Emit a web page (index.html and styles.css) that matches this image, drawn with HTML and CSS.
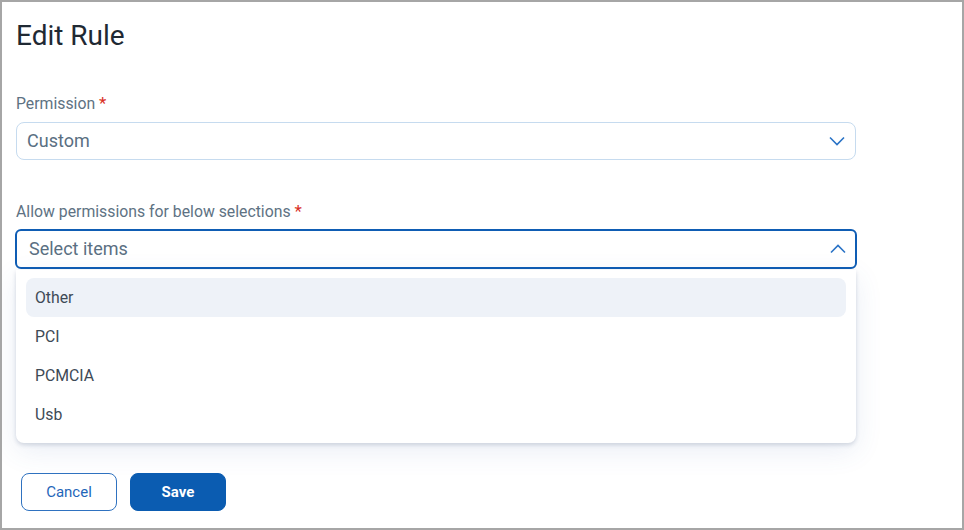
FILE: index.html
```
<!DOCTYPE html>
<html>
<head>
<meta charset="utf-8">
<link rel="stylesheet" href="styles.css">
</head>
<body>
<div class="frame">
  <h1 class="title">Edit Rule</h1>
  <div class="field field-first">
    <label class="label">Permission <span class="req">*</span></label>
    <div class="select">
      <span class="select-value">Custom</span>
      <svg class="chev" width="16" height="10" viewBox="0 0 16 10"><path d="M1 1.5 L8 8.5 L15 1.5" fill="none" stroke="#2a73c6" stroke-width="1.6"/></svg>
    </div>
  </div>
  <div class="field field-second">
    <label class="label">Allow permissions for below selections <span class="req">*</span></label>
    <div class="select select-open">
      <span class="select-value placeholder">Select items</span>
      <svg class="chev" width="16" height="10" viewBox="0 0 16 10"><path d="M1 8.5 L8 1.5 L15 8.5" fill="none" stroke="#2a73c6" stroke-width="1.6"/></svg>
    </div>
    <ul class="menu">
      <li class="item item-active">Other</li>
      <li class="item">PCI</li>
      <li class="item">PCMCIA</li>
      <li class="item">Usb</li>
    </ul>
  </div>
  <div class="actions">
    <button class="btn btn-outline">Cancel</button>
    <button class="btn btn-primary">Save</button>
  </div>
</div>
</body>
</html>
```
FILE: styles.css
```
html, body {
  margin: 0;
  padding: 0;
  background: #ffffff;
}
.frame {
  width: 964px;
  height: 530px;
  box-sizing: border-box;
  border: 2px solid #a6a6a6;
  padding: 16px 0 0 14px;
  font-family: Roboto, "Liberation Sans", sans-serif;
  overflow: hidden;
}
.title {
  margin: 0;
  font-size: 28px;
  line-height: 36px;
  font-weight: 400;
  color: #1f2933;
}
.field {
  width: 840px;
}
.field-first {
  margin-top: 39px;
}
.field-second {
  margin-top: 41px;
}
.label {
  display: block;
  height: 20px;
  font-size: 15.8px;
  line-height: 20px;
  color: #5e7283;
}
.req {
  color: #d93025;
  font-size: 17px;
  line-height: 20px;
}
.select {
  margin-top: 9px;
  height: 38px;
  box-sizing: border-box;
  border: 1px solid #c6dbef;
  border-radius: 8px;
  display: flex;
  align-items: center;
  justify-content: space-between;
  padding: 0 10px 0 10px;
}
.select-open {
  margin-top: 8px;
  margin-left: -1px;
  width: 842px;
  height: 40px;
  border: 2px solid #0f5db4;
  border-radius: 6px;
  padding: 0 9px 0 12px;
}
.select-value {
  font-size: 18px;
  color: #5a6f82;
  position: relative;
  top: -1px;
}
.placeholder {
  color: #5a6f82;
}
.chev {
  display: block;
}
.menu {
  list-style: none;
  margin: 1px 0 0 0;
  padding: 8px 10px 9px 10px;
  background: #ffffff;
  border-radius: 0 0 8px 8px;
  box-shadow: 0 2px 4px rgba(40, 60, 100, 0.18), 0 8px 28px rgba(60, 100, 170, 0.11);
}
.item {
  height: 39px;
  display: flex;
  align-items: center;
  padding-left: 9px;
  font-size: 15.8px;
  color: #3e4a56;
  border-radius: 8px;
}
.item-active {
  background: #eef2f8;
}
.actions {
  display: flex;
  gap: 13px;
  margin-top: 30px;
  padding-left: 5px;
}
.btn {
  width: 96px;
  height: 38px;
  box-sizing: border-box;
  border-radius: 8px;
  font-family: Roboto, "Liberation Sans", sans-serif;
  font-size: 15px;
  cursor: pointer;
}
.btn-outline {
  background: #ffffff;
  border: 1px solid #2f72c0;
  color: #1f66b9;
}
.btn-primary {
  background: #0b5cb1;
  border: 1px solid #0b5cb1;
  color: #ffffff;
  font-weight: 700;
}
```
